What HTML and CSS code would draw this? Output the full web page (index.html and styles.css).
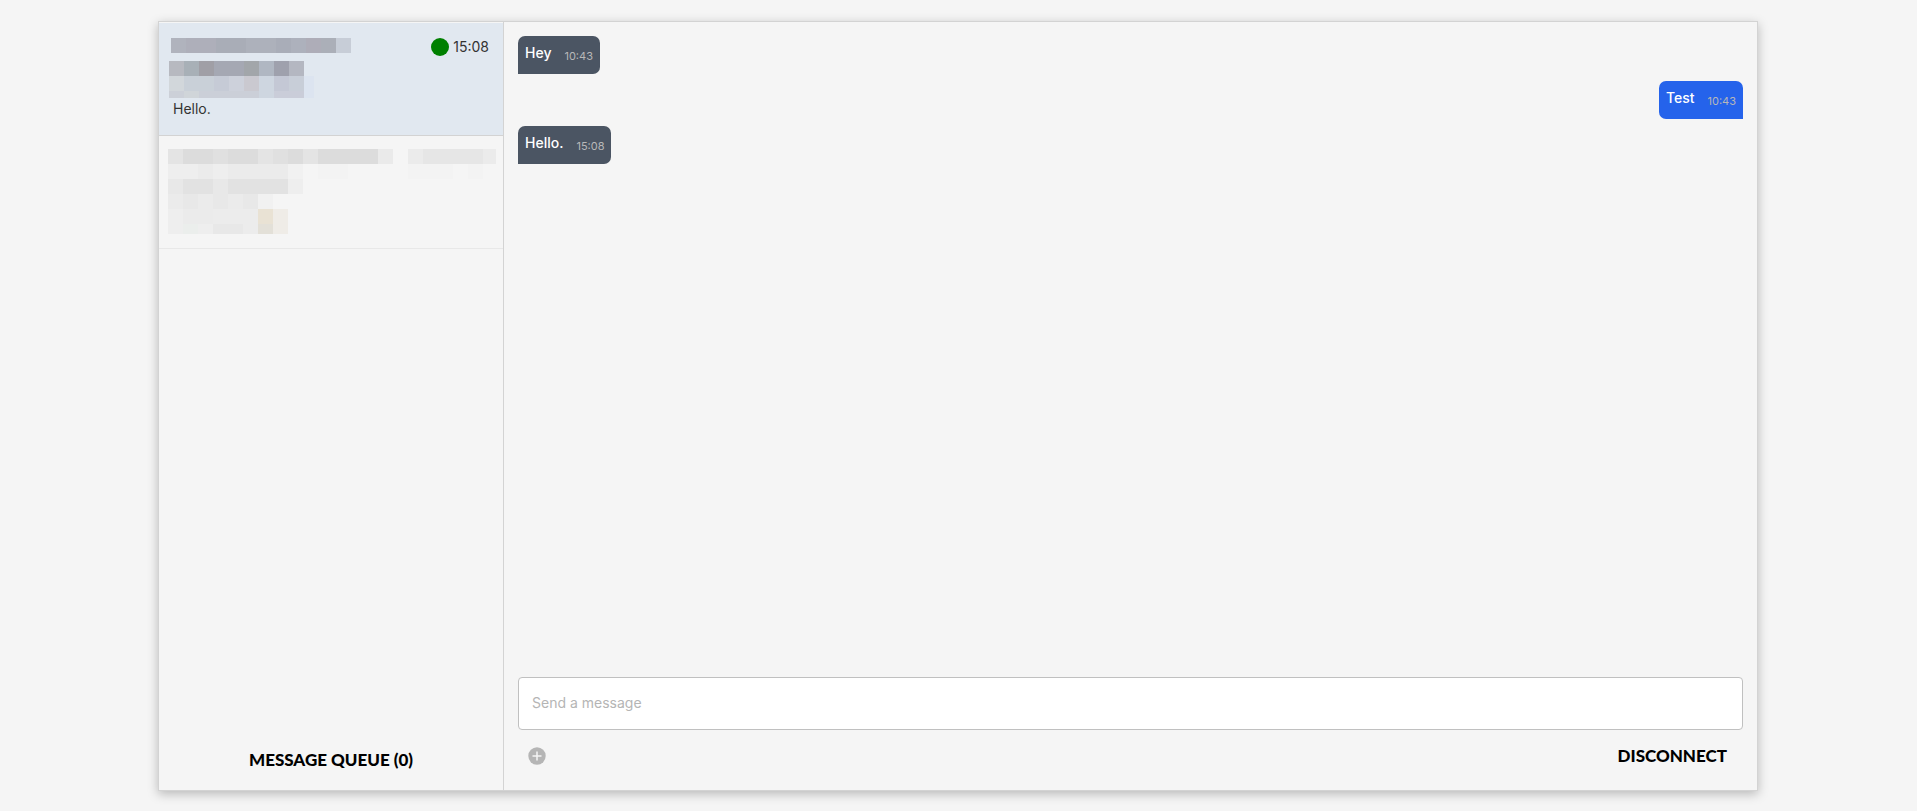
FILE: index.html
```html
<!DOCTYPE html>
<html lang="en">

<head>
    <meta charset="UTF-8">
    <meta name="viewport" content="width=device-width, initial-scale=1.0">
    <title>Chat</title>
    <link rel="stylesheet" href="styles.css">
</head>

<body>
    <main class="chat">
        <!-- Conversations -->
        <aside class="sidebar">
            <ul class="conversations">
                <li class="conversation active">
                    <div class="conversation-header">
                        <svg class="hidden-name" width="182" height="15" shape-rendering="crispEdges">
                            <path fill="#b0b3bd" d="M2 0h15v15H2z" />
                            <path fill="#aeafba" d="M17 0h30v15H17z" />
                            <path fill="#a9adb7" d="M47 0h30v15H47z" />
                            <path fill="#adb1bb" d="M77 0h30v15H77z" />
                            <path fill="#a9adb8" d="M107 0h15v15h-15z" />
                            <path fill="#adb1bc" d="M122 0h15v15h-15z" />
                            <path fill="#aeadb8" d="M137 0h15v15h-15z" />
                            <path fill="#abafb8" d="M152 0h15v15h-15z" />
                            <path fill="#c7cdd7" d="M167 0h15v15h-15z" />
                        </svg>
                        <div class="status">
                            <span class="dot"></span>
                            <time>15:08</time>
                        </div>
                    </div>
                    <svg class="hidden-info" width="145" height="37" shape-rendering="crispEdges">
                        <path fill="#b7b9c0" d="M0 0h15v15H0z" />
                        <path fill="#a8b0b7" d="M15 0h15v15H15z" />
                        <path fill="#a09fa6" d="M30 0h15v15H30z" />
                        <path fill="#a5a8b3" d="M45 0h30v15H45z" />
                        <path fill="#a2a6aa" d="M75 0h15v15H75z" />
                        <path fill="#b0b7c2" d="M90 0h15v15H90z" />
                        <path fill="#9fa1ad" d="M105 0h15v15h-15z" />
                        <path fill="#b4b7c1" d="M120 0h15v15h-15z" />
                        <path fill="#d2d7db" d="M0 15h15v15H0z" />
                        <path fill="#c9d0d8" d="M15 15h30v15H15z" />
                        <path fill="#c6cbd6" d="M45 15h15v15H45z" />
                        <path fill="#cdd1db" d="M60 15h15v15H60z" />
                        <path fill="#cac9d0" d="M75 15h15v15H75z" />
                        <path fill="#ced6e0" d="M90 15h15v22H90z" />
                        <path fill="#c4c8d5" d="M105 15h15v15h-15z" />
                        <path fill="#c8ced8" d="M120 15h15v15h-15z" />
                        <path fill="#dce4f0" d="M135 15h10v22h-10z" />
                        <path fill="#ccd0d8" d="M0 30h15v7H0z" />
                        <path fill="#d0d5d9" d="M15 30h15v7H15z" />
                        <path fill="#cbcfd8" d="M30 30h60v7H30z" />
                        <path fill="#cacdd9" d="M105 30h30v7h-30z" />
                    </svg>
                    <p class="preview">Hello.</p>
                </li>
                <li class="conversation">
                    <div class="conversation-header">
                        <svg class="hidden-info" width="225" height="85" shape-rendering="crispEdges">
                            <path fill="#e4e4e4" d="M0 0h15v15H0zM90 0h15v15H90zM135 0h15v15h-15z" />
                            <path fill="#dcdcdc" d="M15 0h30v15H15zM60 0h30v15H60zM120 0h15v15h-15zM150 0h60v15h-60z" />
                            <path fill="#e0e0e0" d="M45 0h15v15H45zM105 0h15v15h-15z" />
                            <path fill="#eaeaea" d="M210 0h15v15h-15z" />
                            <path fill="#eeeeee" d="M0 15h30v15H0zM45 15h15v15H45zM120 30h15v15h-15zM0 60h15v25H0zM30 75h15v10H30z" />
                            <path fill="#ebebeb" d="M30 15h15v15H30zM60 15h60v15H60zM0 45h15v15H0zM30 45h15v15H30zM60 45h15v15H60zM15 60h30v15H15z" />
                            <path fill="#f1f1f1" d="M120 15h15v15h-15zM90 45h15v15H90z" />
                            <path fill="#f3f3f3" d="M150 15h30v15h-30z" />
                            <path fill="#e8e8e8" d="M0 30h15v15H0zM45 30h15v15H45zM15 45h15v15H15zM45 45h15v15H45zM75 45h15v15H75zM45 75h30v10H45z" />
                            <path fill="#e2e2e2" d="M15 30h30v15H15zM60 30h60v15H60z" />
                            <path fill="#ececec" d="M45 60h45v15H45zM75 75h15v10H75z" />
                            <path fill="#ebeeec" d="M15 75h15v10H15z" />
                            <path fill="#e9e2d4" d="M90 60h15v15H90z" />
                            <path fill="#efece7" d="M105 60h15v25h-15z" />
                            <path fill="#e3e0d8" d="M90 75h15v10H90z" />
                        </svg>
                        <svg class="hidden-date" width="88" height="30" shape-rendering="crispEdges">
                            <path fill="#ebebeb" d="M0 0h15v15H0zM75 0h13v15H75z" />
                            <path fill="#e6e6e6" d="M15 0h60v15H15z" />
                            <path fill="#f3f3f3" d="M0 15h45v15H0zM60 15h15v15H60z" />
                        </svg>
                    </div>
                </li>
            </ul>
            <button class="btn-queue" type="button">MESSAGE QUEUE (0)</button>
        </aside>

        <!-- Selected conversation -->
        <section class="room">
            <div class="messages">
                <div class="message received">
                    <span class="text">Hey</span>
                    <time class="time">10:43</time>
                </div>
                <div class="message sent">
                    <span class="text">Test</span>
                    <time class="time">10:43</time>
                </div>
                <div class="message received">
                    <span class="text">Hello.</span>
                    <time class="time">15:08</time>
                </div>
            </div>
            <form class="composer">
                <input class="message-input" type="text" placeholder="Send a message" aria-label="Send a message">
                <div class="actions">
                    <button class="btn-attach" type="button" aria-label="Add attachment">
                        <svg width="18" height="18" viewBox="0 0 18 18">
                            <circle cx="9" cy="9" r="8.7" fill="#b5b5b5" />
                            <path d="M9 4.5v9M4.5 9h9" stroke="#f5f5f5" stroke-width="1.5" />
                        </svg>
                    </button>
                    <button class="btn-disconnect" type="button">DISCONNECT</button>
                </div>
            </form>
        </section>
    </main>
</body>

</html>
```

FILE: styles.css
```css
* {
    box-sizing: border-box;
}

body {
    margin: 0;
    padding: 21px 21px 20px 20px;
    height: 100vh;
    background-color: #f5f5f5;
    font-family: Inter, "Liberation Sans", sans-serif;
    font-size: 14px;
    color: #333;
}

button {
    border: none;
    background: none;
    padding: 0;
    cursor: pointer;
}

.chat {
    display: flex;
    max-width: 1600px;
    height: 100%;
    margin: 0 auto;
    border: 1px solid #d3d3d3;
    box-shadow: 0 3px 10px rgba(0, 0, 0, 0.25);
}

/* Sidebar */
.sidebar {
    display: flex;
    flex-direction: column;
    flex: 0 0 345px;
    padding-top: 1px;
    border-right: 1px solid #d3d3d3;
}

.conversations {
    flex: 1;
    margin: 0;
    padding: 0;
    list-style: none;
    overflow-y: auto;
}

.conversation {
    height: 113px;
    padding: 13px 7px 0 9px;
    border-bottom: 1px solid #e8e8e8;
}

.conversation.active {
    padding: 15px 14px 0 10px;
    background-color: #e1e8f0;
    border-bottom-color: #d3d3d3;
}

.conversation svg {
    display: block;
}

.conversation-header {
    display: flex;
    justify-content: space-between;
    align-items: flex-start;
}

.active .conversation-header {
    height: 23px;
}

.status {
    display: flex;
    align-items: center;
    gap: 4px;
    line-height: 18px;
}

.dot {
    width: 18px;
    height: 18px;
    border-radius: 50%;
    background-color: green;
}

.preview {
    margin: 1px 0 0 4px;
    line-height: 20px;
}

.btn-queue,
.btn-disconnect {
    font-family: Lato, "Liberation Sans", sans-serif;
    font-size: 17px;
    font-weight: 900;
    line-height: 20px;
    color: #000;
}

.btn-queue {
    padding: 10px;
    margin-bottom: 10px;
}

/* Messages */
.room {
    display: flex;
    flex-direction: column;
    flex: 1;
    min-width: 0;
    padding: 14px;
}

.messages {
    display: flex;
    flex-direction: column;
    flex: 1;
    gap: 7px;
    overflow-y: auto;
}

.message {
    display: flex;
    gap: 13px;
    padding: 7px 7px 8px;
    line-height: 20px;
    color: #fff;
}

.message.received {
    align-self: flex-start;
    background-color: #4b5563;
    border-radius: 7px 7px 7px 0;
}

.message.sent {
    align-self: flex-end;
    background-color: #2563eb;
    border-radius: 7px 7px 0 7px;
}

.text {
    font-weight: 500;
}

.time {
    padding-top: 3px;
    font-size: 11px;
    color: #b8b8b8;
}

/* Composer */
.message-input {
    display: block;
    width: 100%;
    height: 53px;
    padding: 0 13px 2px;
    border: 1px solid #c0c0c0;
    border-radius: 4px;
    background-color: #fff;
    font-family: inherit;
    font-size: 14px;
    outline: none;
}

.message-input::placeholder {
    color: #b5b5b5;
}

.actions {
    display: flex;
    justify-content: space-between;
    align-items: center;
    height: 46px;
    padding: 6px 16px 0 10px;
}

.btn-attach svg {
    display: block;
}
```
